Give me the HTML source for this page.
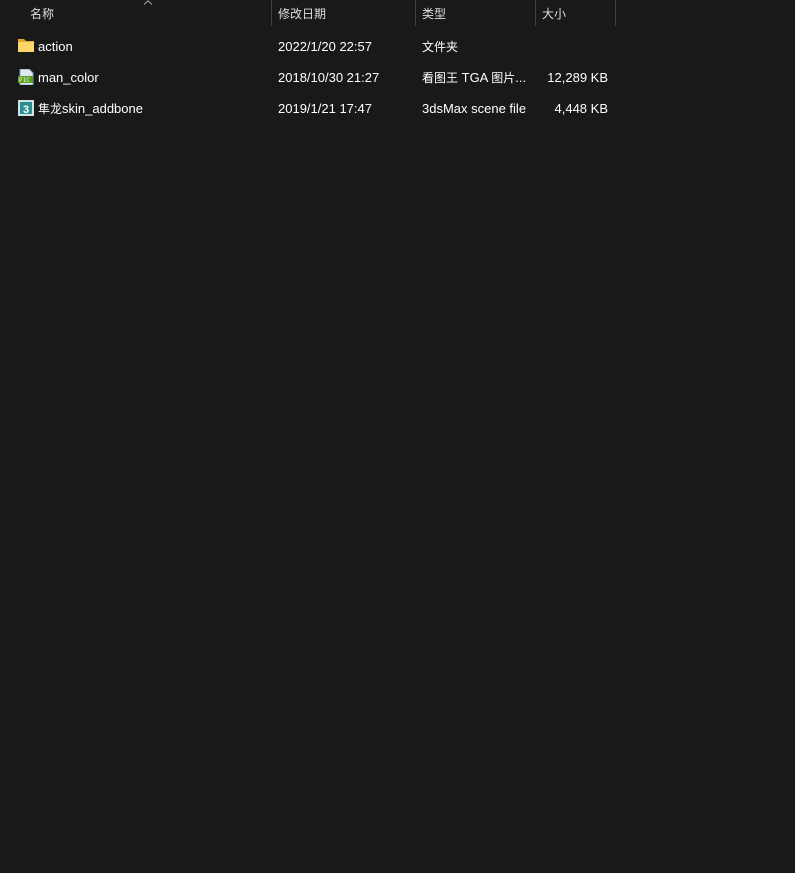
<!DOCTYPE html>
<html><head><meta charset="utf-8"><style>
html,body{margin:0;width:795px;height:873px;background:#191919;overflow:hidden}
body{font-family:"Liberation Sans","Noto Sans CJK SC",sans-serif;font-size:13px;color:#fff;position:relative}
.t{position:absolute;white-space:nowrap;line-height:14px}
.c{font-size:12px}
.h{color:#dedede;font-size:12px}
.r{text-align:right;width:80px}
.sep{position:absolute;top:0;width:1px;height:26px;background:#3f3f3f}
</style></head><body>
<svg style="position:absolute;left:143px;top:0" width="10" height="5"><path d="M1 4.5L5 0.8L9 4.5" stroke="#aaa" fill="none"/></svg>
<div class="t h" style="left:30px;top:7px">名称</div>
<div class="sep" style="left:271px"></div>
<div class="t h" style="left:278px;top:7px">修改日期</div>
<div class="sep" style="left:415px"></div>
<div class="t h" style="left:422px;top:7px">类型</div>
<div class="sep" style="left:535px"></div>
<div class="t h" style="left:542px;top:7px">大小</div>
<div class="sep" style="left:615px"></div>

<svg style="position:absolute;left:18px;top:38px" width="16" height="15"><path d="M0 1h6l2 2h8v11H0z" fill="#e6a92a"/><rect x="0" y="4" width="16" height="10" fill="#fcd66a"/></svg>
<div class="t" style="left:38px;top:40px">action</div>
<div class="t" style="left:278px;top:40px">2022/1/20 22:57</div>
<div class="t c" style="left:422px;top:40px">文件夹</div>

<svg style="position:absolute;left:18px;top:69px" width="16" height="16"><path d="M2 0h9l4 4v12H2z" fill="#dfe9f2" stroke="#7ea3c0"/><rect x="0" y="7" width="15" height="7" fill="#5a9e1e"/><text x="1" y="13" font-size="6" fill="#fff" font-family="Liberation Mono">PIC</text></svg>
<div class="t" style="left:38px;top:71px">man_color</div>
<div class="t" style="left:278px;top:71px">2018/10/30 21:27</div>
<div class="t" style="left:422px;top:71px"><span class="c">看图王</span> TGA <span class="c">图片</span>...</div>
<div class="t r" style="left:528px;top:71px">12,289 KB</div>

<svg style="position:absolute;left:18px;top:100px" width="16" height="16"><rect width="16" height="16" fill="#cfe4e4"/><rect x="2" y="2" width="12" height="12" fill="#2a8f8f"/><text x="5" y="13" font-size="11" font-weight="bold" fill="#fff">3</text></svg>
<div class="t" style="left:38px;top:102px"><span class="c">隼龙</span>skin_addbone</div>
<div class="t" style="left:278px;top:102px">2019/1/21 17:47</div>
<div class="t" style="left:422px;top:102px">3dsMax scene file</div>
<div class="t r" style="left:528px;top:102px">4,448 KB</div>
</body></html>
